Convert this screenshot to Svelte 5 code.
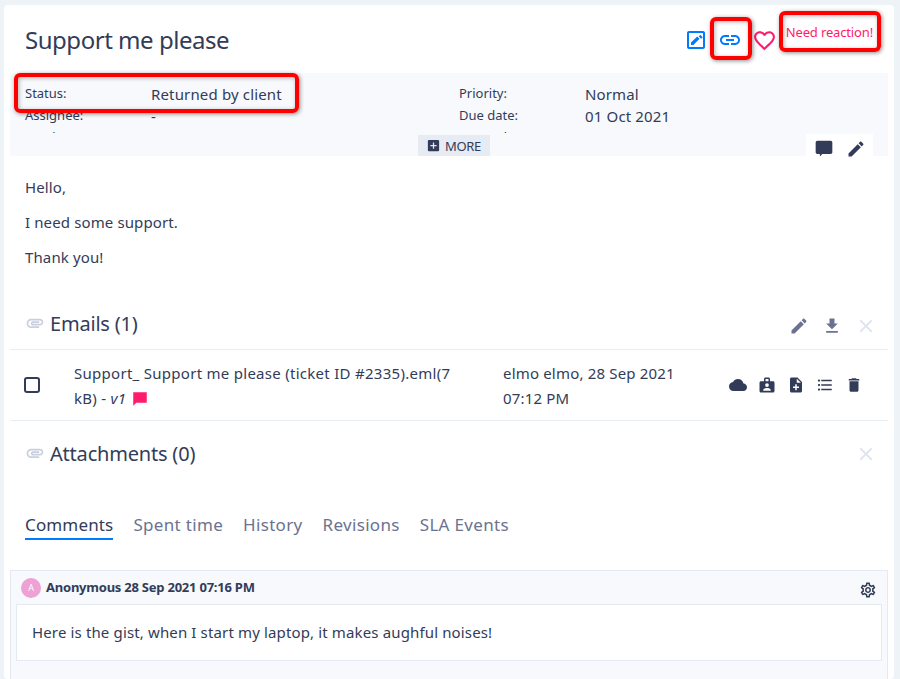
<script>
	const paths = {
		link: 'M3.9 12c0-1.71 1.39-3.1 3.1-3.1h4V7H7c-2.76 0-5 2.24-5 5s2.24 5 5 5h4v-1.9H7c-1.71 0-3.1-1.39-3.1-3.1zM8 13h8v-2H8v2zm9-6h-4v1.9h4c1.71 0 3.1 1.39 3.1 3.1s-1.39 3.1-3.1 3.1h-4V17h4c2.76 0 5-2.24 5-5s-2.24-5-5-5z',
		heart: 'M16.5 3c-1.74 0-3.41.81-4.5 2.09C10.91 3.81 9.24 3 7.5 3 4.42 3 2 5.42 2 8.5c0 3.78 3.4 6.86 8.55 11.54L12 21.35l1.45-1.32C18.6 15.36 22 12.28 22 8.5 22 5.42 19.58 3 16.5 3zm-4.4 15.55l-.1.1-.1-.1C7.14 14.24 4 11.39 4 8.5 4 6.5 5.5 5 7.5 5c1.54 0 3.04.99 3.57 2.36h1.87C13.46 5.99 14.96 5 16.5 5c2 0 3.5 1.5 3.5 3.5 0 2.89-3.14 5.74-7.9 10.05z',
		editBox: 'M5 3c-1.1 0-2 .9-2 2v14c0 1.1.9 2 2 2h14c1.1 0 2-.9 2-2V5c0-1.1-.9-2-2-2H5zm0 2h14v14H5V5zM7 14.6V17h2.4l6.2-6.2-2.4-2.4L7 14.6zm9.8-7.3c-.25-.25-.65-.25-.9 0l-1.1 1.1 2.4 2.4 1.1-1.1c.25-.25.25-.65 0-.9l-1.5-1.5z',
		chat: 'M20 2H4c-1.1 0-2 .9-2 2v12c0 1.1.9 2 2 2h3v3l3-3h10c1.1 0 2-.9 2-2V4c0-1.1-.9-2-2-2z',
		edit: 'M3 17.25V21h3.75L17.81 9.94l-3.75-3.75L3 17.25zM20.71 7.04c.39-.39.39-1.02 0-1.41l-2.34-2.34c-.39-.39-1.02-.39-1.41 0l-1.83 1.83 3.75 3.75 1.83-1.83z',
		download: 'M19 9h-4V3H9v6H5l7 7 7-7zM5 18v2h14v-2H5z',
		close: 'M19 6.41L17.59 5 12 10.59 6.41 5 5 6.41 10.59 12 5 17.59 6.41 19 12 13.41 17.59 19 19 17.59 13.41 12z',
		cloud: 'M19.35 10.04C18.67 6.59 15.64 4 12 4 9.11 4 6.6 5.64 5.35 8.04 2.34 8.36 0 10.91 0 14c0 3.31 2.69 6 6 6h13c2.76 0 5-2.24 5-5 0-2.64-2.05-4.78-4.65-4.96z',
		badge: 'M20 7h-4V4c0-1.1-.9-2-2-2h-4c-1.1 0-2 .9-2 2v3H4c-1.1 0-2 .9-2 2v11c0 1.1.9 2 2 2h16c1.1 0 2-.9 2-2V9c0-1.1-.9-2-2-2zM10 4h4v3h-4V4zm2 5.5a2.5 2.5 0 1 1 0 5 2.5 2.5 0 0 1 0-5zM17 19.5H7v-1c0-1.7 3.3-2.5 5-2.5s5 .8 5 2.5v1z',
		noteAdd: 'M14 2H6c-1.1 0-1.99.9-1.99 2L4 20c0 1.1.89 2 1.99 2H18c1.1 0 2-.9 2-2V8l-6-6zm2 14h-3v3h-2v-3H8v-2h3v-3h2v3h3v2zm-3-7V3.5L18.5 9H13z',
		list: 'M4 10.5c-.83 0-1.5.67-1.5 1.5s.67 1.5 1.5 1.5 1.5-.67 1.5-1.5-.67-1.5-1.5-1.5zm0-6c-.83 0-1.5.67-1.5 1.5S3.17 7.5 4 7.5 5.5 6.83 5.5 6 4.83 4.5 4 4.5zm0 12c-.83 0-1.5.68-1.5 1.5s.68 1.5 1.5 1.5 1.5-.68 1.5-1.5-.67-1.5-1.5-1.5zM7 19h14v-2H7v2zm0-6h14v-2H7v2zm0-8v2h14V5H7z',
		trash: 'M6 19c0 1.1.9 2 2 2h8c1.1 0 2-.9 2-2V7H6v12zM19 4h-3.5l-1-1h-5l-1 1H5v2h14V4z',
		gear: 'M19.43 12.98c.04-.32.07-.64.07-.98 0-.34-.03-.66-.07-.98l2.11-1.65c.19-.15.24-.42.12-.64l-2-3.46c-.09-.16-.26-.25-.44-.25-.06 0-.12.01-.17.03l-2.49 1c-.52-.4-1.08-.73-1.69-.98l-.38-2.65C14.46 2.18 14.25 2 14 2h-4c-.25 0-.46.18-.49.42l-.38 2.65c-.61.25-1.17.59-1.69.98l-2.49-1c-.06-.02-.12-.03-.18-.03-.17 0-.34.09-.43.25l-2 3.46c-.13.22-.07.49.12.64l2.11 1.65c-.04.32-.07.65-.07.98 0 .33.03.66.07.98l-2.11 1.65c-.19.15-.24.42-.12.64l2 3.46c.09.16.26.25.44.25.06 0 .12-.01.17-.03l2.49-1c.52.4 1.08.73 1.69.98l.38 2.65c.03.24.24.42.49.42h4c.25 0 .46-.18.49-.42l.38-2.65c.61-.25 1.17-.59 1.69-.98l2.49 1c.06.02.12.03.18.03.17 0 .34-.09.43-.25l2-3.46c.12-.22.07-.49-.12-.64l-2.11-1.65zm-1.98-1.71c.04.31.05.52.05.73 0 .21-.02.43-.05.73l-.14 1.13.89.7 1.08.84-.7 1.21-1.27-.51-1.04-.42-.9.68c-.43.32-.84.56-1.25.73l-1.06.43-.16 1.13-.2 1.35h-1.4l-.19-1.35-.16-1.13-1.06-.43c-.43-.18-.83-.41-1.23-.71l-.91-.7-1.06.43-1.27.51-.7-1.21 1.08-.84.89-.7-.14-1.13c-.03-.31-.05-.54-.05-.74s.02-.43.05-.73l.14-1.13-.89-.7-1.08-.84.7-1.21 1.27.51 1.04.42.9-.68c.43-.32.84-.56 1.25-.73l1.06-.43.16-1.13.2-1.35h1.39l.19 1.35.16 1.13 1.06.43c.43.18.83.41 1.23.71l.91.7 1.06-.43 1.27-.51.7 1.21-1.07.85-.89.7.14 1.13zM12 8c-2.21 0-4 1.79-4 4s1.79 4 4 4 4-1.79 4-4-1.79-4-4-4zm0 6c-1.1 0-2-.9-2-2s.9-2 2-2 2 .9 2 2-.9 2-2 2z',
		addBox: 'M19 3H5c-1.11 0-2 .9-2 2v14c0 1.1.89 2 2 2h14c1.1 0 2-.9 2-2V5c0-1.1-.9-2-2-2zm-2 10h-4v4h-2v-4H7v-2h4V7h2v4h4v2z',
		attach: 'M2 12.5C2 9.46 4.46 7 7.5 7H18c2.21 0 4 1.79 4 4s-1.79 4-4 4H9.5C8.12 15 7 13.88 7 12.5S8.12 10 9.5 10H17v2H9.41c-.55 0-.55 1 0 1H18c1.1 0 2-.9 2-2s-.9-2-2-2H7.5C5.57 9 4 10.57 4 12.5S5.57 16 7.5 16H17v2H7.5C4.46 18 2 15.54 2 12.5z',
		flag: 'M3 3h18v14H7l-4 4V3z'
	};

	const rows = [
		['Status:', 'Returned by client', 'Priority:', 'Normal'],
		['Assignee:', '-', 'Due date:', '01 Oct 2021'],
		['Sender:', '-', 'Created:', '-']
	];
	const tabs = ['Comments', 'Spent time', 'History', 'Revisions', 'SLA Events'];
	const emailIcons = ['cloud', 'badge', 'noteAdd', 'list', 'trash'];
</script>

{#snippet icon(name, size = 20)}
	<svg class="icon" width={size} height={size} viewBox="0 0 24 24" aria-hidden="true">
		<path d={paths[name]} fill="currentColor" fill-rule="evenodd" />
	</svg>
{/snippet}

<div class="page">
	<div class="card">
		<header class="head">
			<h1>Support me please</h1>
			<div class="head-actions">
				<span class="blue edit-box">{@render icon('editBox', 24)}</span>
				<span class="blue link">{@render icon('link', 24)}</span>
				<span class="pink heart">{@render icon('heart', 25)}</span>
				<span class="reaction">Need reaction!</span>
			</div>
		</header>

		<section class="info">
			<div class="info-clip">
				{#each rows as row}
					<div class="info-row">
						<span class="lbl">{row[0]}</span>
						<span class="val">{row[1]}</span>
						<span class="lbl">{row[2]}</span>
						<span class="val">{row[3]}</span>
					</div>
				{/each}
			</div>
			<div class="info-foot">
				<button class="more">{@render icon('addBox', 15)}<span>MORE</span></button>
				<div class="tools">
					{@render icon('chat', 20)}
					{@render icon('edit', 20)}
				</div>
			</div>
		</section>

		<div class="message">
			<p>Hello,</p>
			<p>I need some support.</p>
			<p>Thank you!</p>
		</div>

		<div class="files-head emails">
			<span class="clip">{@render icon('attach', 20)}</span>
			<h2>Emails (1)</h2>
			<div class="files-actions">
				<span class="slate">{@render icon('edit', 20)}</span>
				<span class="slate">{@render icon('download', 20)}</span>
				<span class="faint">{@render icon('close', 22)}</span>
			</div>
		</div>

		<div class="email-row">
			<span class="check"></span>
			<div class="email-name">
				Support_ Support me please (ticket ID #2335).eml(7 kB) - <em>v1</em>
				<span class="pink flag">{@render icon('flag', 18)}</span>
			</div>
			<div class="email-meta">elmo elmo, 28 Sep 2021 07:12 PM</div>
			<div class="email-icons">
				{#each emailIcons as name}
					{@render icon(name, 18)}
				{/each}
			</div>
		</div>

		<div class="files-head attachments">
			<span class="clip">{@render icon('attach', 20)}</span>
			<h2>Attachments (0)</h2>
			<div class="files-actions">
				<span class="faint">{@render icon('close', 22)}</span>
			</div>
		</div>

		<nav class="tabs">
			{#each tabs as tab, i}
				<span class="tab" class:active={i === 0}>{tab}</span>
			{/each}
		</nav>

		<section class="comment">
			<div class="comment-head">
				<span class="avatar">A</span>
				<strong>Anonymous 28 Sep 2021 07:16 PM</strong>
				<span class="gear">{@render icon('gear', 18)}</span>
			</div>
			<div class="comment-body">Here is the gist, when I start my laptop, it makes aughful noises!</div>
		</section>
	</div>

	<!-- red annotations painted on the screenshot -->
	<i class="mark mark-status"></i>
	<i class="mark mark-link"></i>
	<i class="mark mark-reaction"></i>
</div>

<style>
	:global(body) {
		background: #eef3f7;
		font-family: 'Noto Sans', 'Open Sans', sans-serif;
		color: #323c58;
	}

	.page {
		position: relative;
		height: 679px;
		overflow: hidden;
		padding: 5px 6px 0 4px;
		box-sizing: border-box;
	}

	.card {
		background: #fff;
		border-radius: 4px;
		padding: 0 6px;
		height: 100%;
	}

	.icon {
		display: block;
		flex: none;
	}

	.blue {
		color: #007bff;
	}

	.pink {
		color: #ff1a6c;
	}

	.slate {
		color: #6b7291;
	}

	.faint {
		color: #dfe4f0;
	}

	.head {
		height: 68px;
		display: flex;
		justify-content: space-between;
		padding: 0 15px;
	}

	h1 {
		margin: 0;
		font-size: 24px;
		font-weight: 400;
		line-height: 69px;
		letter-spacing: -0.47px;
	}

	.head-actions {
		display: flex;
		align-items: flex-start;
	}

	.edit-box {
		margin-top: 23px;
	}

	.link {
		margin: 23px 0 0 10px;
	}

	.heart {
		margin: 23px 0 0 10px;
	}

	.reaction {
		margin: 19px 0 0 9px;
		font-size: 13px;
		line-height: 17px;
		letter-spacing: -0.15px;
		color: #ff1a6c;
	}

	.info {
		height: 83px;
		background: #f7f9fc;
	}

	.info-clip {
		height: 60px;
		overflow: hidden;
		padding: 9px 15px 0;
		box-sizing: border-box;
	}

	.info-row {
		display: grid;
		grid-template-columns: 126px 308px 126px 1fr;
		grid-template-rows: 22px;
		height: 22px;
		align-items: start;
	}

	.lbl {
		font-size: 13px;
		line-height: 22px;
	}

	.val {
		font-size: 15px;
		line-height: 22px;
		padding-top: 1px;
		letter-spacing: 0.15px;
	}

	.info-foot {
		display: grid;
		grid-template-columns: 1fr auto 1fr;
		padding: 0 15px 0 25px;
		height: 23px;
		align-items: end;
	}

	.more {
		grid-column: 2;
		display: flex;
		align-items: center;
		gap: 4px;
		height: 21px;
		padding: 0 9px 0 8px;
		border: 0;
		background: #e6ebf4;
		color: #323c58;
		font: inherit;
		font-size: 13px;
		letter-spacing: -0.3px;
	}

	.tools {
		grid-column: 3;
		justify-self: end;
		display: flex;
		align-items: flex-start;
		gap: 12px;
		height: 22px;
		box-sizing: border-box;
		padding: 5px 7px 0 8px;
		background: #fff;
	}

	.message {
		padding: 21px 15px 0;
		height: 125px;
		box-sizing: border-box;
	}

	.message p {
		margin: 0 0 14px;
		font-size: 15px;
		line-height: 21px;
		letter-spacing: 0.12px;
	}

	.files-head {
		display: flex;
		align-items: center;
		padding: 0 11px 0 15px;
	}

	.emails {
		height: 69px;
		padding-top: 16px;
		border-bottom: 1px solid #e8ecf3;
		box-sizing: border-box;
	}

	.emails .files-actions {
		margin-top: 5px;
	}

	.attachments {
		height: 68px;
		padding-bottom: 4px;
		box-sizing: border-box;
	}

	.attachments .files-actions {
		margin-top: 2px;
	}

	.clip {
		color: #c9cfdc;
		margin-right: 5px;
	}

	h2 {
		margin: 0;
		font-size: 20px;
		font-weight: 400;
		letter-spacing: -0.2px;
	}

	.files-actions {
		margin-left: auto;
		display: flex;
		align-items: center;
		gap: 13px;
	}

	.email-row {
		display: flex;
		align-items: center;
		height: 71px;
		border-bottom: 1px solid #e8ecf3;
		box-sizing: border-box;
		padding: 0 25px 0 14px;
	}

	.check {
		flex: none;
		width: 12px;
		height: 12px;
		border: 2px solid #323c58;
		border-radius: 3px;
		margin-right: 34px;
	}

	.email-name {
		width: 390px;
		margin: 2px 39px 0 0;
		font-size: 15px;
		line-height: 25px;
		letter-spacing: 0.28px;
	}

	.flag {
		display: inline-block;
		vertical-align: -4px;
	}

	.email-meta {
		width: 190px;
		margin-top: 2px;
		font-size: 15px;
		line-height: 25px;
		letter-spacing: 0.18px;
	}

	.email-icons {
		margin-left: auto;
		display: flex;
		align-items: center;
		gap: 11px;
	}

	.tabs {
		display: flex;
		gap: 20px;
		padding: 0 15px;
		height: 57px;
		margin-top: 24px;
	}

	.tab {
		align-self: flex-start;
		font-size: 17px;
		line-height: 24px;
		height: 25px;
		color: #6b7291;
		letter-spacing: 0.32px;
	}

	.tab.active {
		color: #323c58;
		letter-spacing: 0.15px;
		border-bottom: 2px solid #007bff;
	}

	.comment {
		background: #f7f9fc;
		border: 1px solid #e4e9f2;
		height: 140px;
		padding: 0 5px;
	}

	.comment-head {
		display: flex;
		align-items: center;
		height: 33px;
		padding: 0 5px;
		font-size: 13px;
		letter-spacing: -0.23px;
	}

	.comment-head strong {
		margin-top: -2px;
	}

	.avatar {
		flex: none;
		width: 20px;
		height: 20px;
		border-radius: 50%;
		background: #eda1d4;
		color: #fff;
		font-size: 9px;
		line-height: 20px;
		text-align: center;
		margin-right: 5px;
	}

	.gear {
		margin: 4px 0 0 auto;
	}

	.comment-body {
		background: #fff;
		border: 1px solid #e4e9f2;
		height: 57px;
		box-sizing: border-box;
		padding: 0 15px;
		font-size: 15px;
		line-height: 55px;
		letter-spacing: 0.14px;
	}

	.mark {
		position: absolute;
		box-sizing: border-box;
		border: 4px solid #fe0000;
		border-radius: 6px;
		box-shadow: 1px 1px 4px rgba(0, 0, 0, 0.45), inset 1px 1px 4px rgba(0, 0, 0, 0.3);
	}

	.mark-status {
		left: 14px;
		top: 73px;
		width: 285px;
		height: 40px;
	}

	.mark-link {
		left: 710px;
		top: 17px;
		width: 42px;
		height: 43px;
	}

	.mark-reaction {
		left: 779px;
		top: 11px;
		width: 102px;
		height: 41px;
	}
</style>
